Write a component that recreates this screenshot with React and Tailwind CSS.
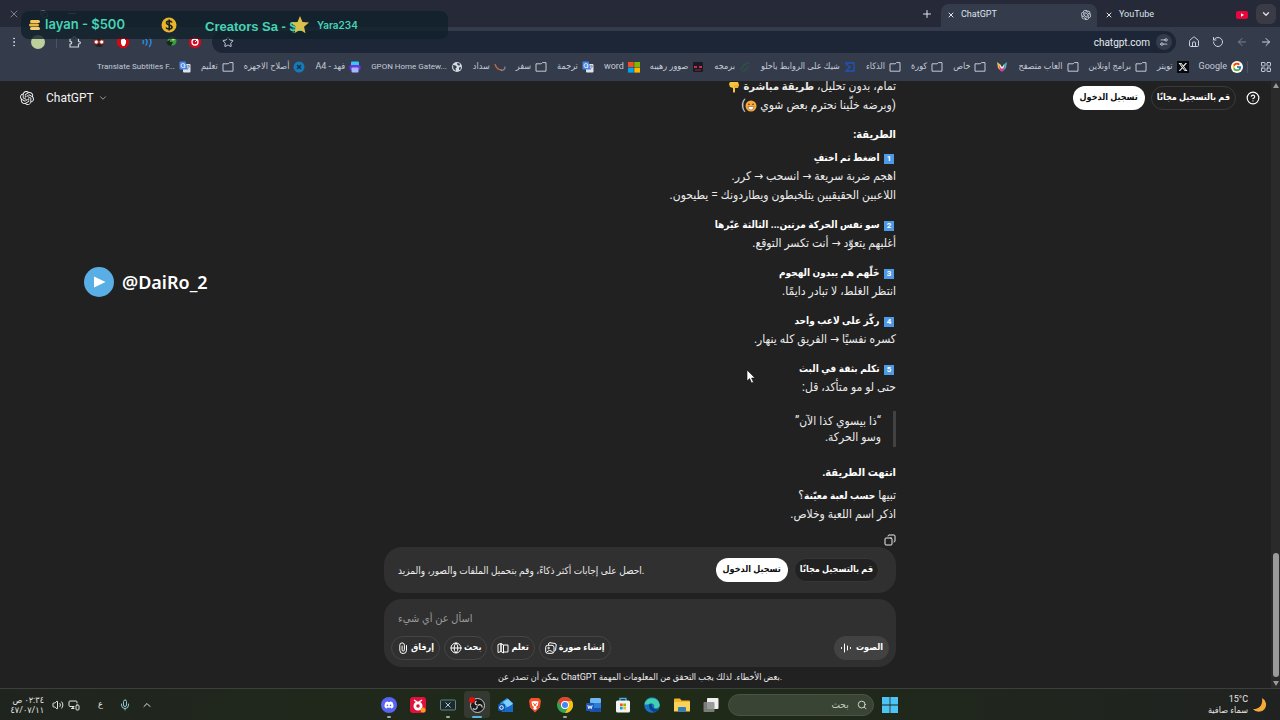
import React, { useState } from "react";
import {
  ArrowLeft,
  ArrowRight,
  ChevronDown,
  ChevronUp,
  CircleHelp,
  Copy,
  EllipsisVertical,
  Globe,
  House,
  LayoutGrid,
  Mic,
  MonitorSmartphone,
  Plus,
  RotateCcw,
  Search,
  Settings2,
  Star,
  Volume2,
  X,
} from "lucide-react";
import { SiOpenai } from "react-icons/si";
import { FcGoogle } from "react-icons/fc";
import { FaDiscord, FaXTwitter } from "react-icons/fa6";

const BookmarkIcon = ({ kind }) => {
  switch (kind) {
    case "folder":
      return (
        <svg className="size-3 shrink-0 text-[#c3cad6]" viewBox="0 0 12 12" fill="none" stroke="currentColor">
          <path d="M1 10.200V2.800h5.200l1.200-1.200H11v8.600z" strokeLinejoin="round" />
        </svg>
      );
    case "google":
      return <FcGoogle className="size-3 shrink-0 rounded-full bg-white p-px" />;
    case "x":
      return <FaXTwitter className="size-3 shrink-0 bg-[#08090b] p-px text-white" />;
    case "fox":
      return (
        <svg className="size-3 shrink-0" viewBox="0 0 12 12">
          <path d="M1 1l4 3v6L2 7z" fill="#e9c64a" />
          <path d="M11 1L7 4v6l3-3z" fill="#45b8b0" />
          <path d="M3 5l3 1 3-1-1 4-2 2-2-2z" fill="#d53a9c" />
          <path d="M4 4l2 2 2-2v2L6 8 4 6z" fill="#f6f1e6" />
        </svg>
      );
    case "sigma":
      return (
        <svg className="size-3 shrink-0" viewBox="0 0 12 12" fill="none" stroke="#2152b8" strokeWidth="1.4">
          <path d="M1 2h9v8H2l4-4-4-3" />
        </svg>
      );
    case "leaf":
      return (
        <svg className="size-3 shrink-0" viewBox="0 0 12 12" fill="none" stroke="#2f5044" strokeWidth="1.6">
          <path d="M2 9c1-4 3-6 8-7M3 10c3 0 6-2 6-5" />
        </svg>
      );
    case "face":
      return (
        <svg className="size-3 shrink-0" viewBox="0 0 12 12">
          <rect x="1" y="1" width="10" height="10" rx="1" fill="#1b1a24" />
          <path d="M2 5h3v2H2zM7 5h3v2H7z" fill="#c3304a" />
          <path d="M3 9h6" stroke="#8a2b3c" />
        </svg>
      );
    case "microsoft":
      return (
        <svg className="size-3 shrink-0" viewBox="0 0 12 12">
          <path d="M0 1h5.700v5H0z" fill="#f25022" />
          <path d="M6.300 1H12v5H6.300z" fill="#7fba00" />
          <path d="M0 6.600h5.700v5H0z" fill="#00a4ef" />
          <path d="M6.300 6.600H12v5H6.300z" fill="#ffb900" />
        </svg>
      );
    case "translate":
      return (
        <svg className="size-3 shrink-0" viewBox="0 0 12 12">
          <rect x="4" y="3" width="7.5" height="8.5" rx="1" fill="#dfe3ea" />
          <path d="M.5 1.500a1 1 0 011-1h5l2.500 8H1.500a1 1 0 01-1-1z" fill="#4a86e8" />
          <path d="M6 4.700A2 2 0 104.500 6.500h1.300V4.800H4.500" fill="none" stroke="#fff" strokeWidth=".8" />
          <path d="M7.800 5h3M9.300 4v1M10.300 5c-.3 1.600-1 2.500-1.800 3" fill="none" stroke="#6c7686" strokeWidth=".7" />
        </svg>
      );
    case "swoosh":
      return (
        <svg className="size-3 shrink-0" viewBox="0 0 12 12" fill="none" strokeWidth="1.3">
          <path d="M1 3c1 4 4 6 7 6" stroke="#c06a3c" />
          <path d="M7 9.500c2 0 4-1 4-4" stroke="#7d8796" />
        </svg>
      );
    case "globe":
      return (
        <svg className="size-3 shrink-0" viewBox="0 0 12 12">
          <circle cx="6" cy="6" r="5" fill="#d5dae3" />
          <path d="M2 4l2.500.5L6 6 4.500 7.500 5 10 2.500 8zM6 1.800l3 1-.5 2-2-.8zM8 6.500l2-.5-.5 2.500L8 9z" fill="#343c4c" />
        </svg>
      );
    case "printer":
      return (
        <svg className="size-3 shrink-0" viewBox="0 0 12 12">
          <rect x="2" y=".5" width="8" height="5" rx="1" fill="#35c8f2" />
          <rect x=".5" y="4" width="11" height="5" rx="1.5" fill="#6b37e0" />
          <rect x="2.5" y="6.500" width="7" height="5" rx="1" fill="#a9b4ff" />
        </svg>
      );
    case "tools":
      return (
        <svg className="size-3 shrink-0" viewBox="0 0 12 12">
          <circle cx="6" cy="6" r="5.500" fill="#1779b5" />
          <path d="M4 4l4 4M8 4L4 8" stroke="#12344e" strokeWidth="1.5" />
        </svg>
      );
    default:
      return null;
  }
};

const bookmarks = [
  { label: "Google", kind: "google" },
  { label: "تويتر", kind: "x" },
  { label: "برامج اونلاين", kind: "folder" },
  { label: "العاب متصفح", kind: "folder" },
  { label: "", kind: "fox" },
  { label: "خاص", kind: "folder" },
  { label: "كورة", kind: "folder" },
  { label: "الذكاء", kind: "folder" },
  { label: "شيك على الروابط ياحلو", kind: "sigma" },
  { label: "برمجه", kind: "leaf" },
  { label: "صوور رهيبه", kind: "face" },
  { label: "word", kind: "microsoft" },
  { label: "ترجمة", kind: "translate" },
  { label: "سفر", kind: "folder" },
  { label: "سداد", kind: "swoosh" },
  { label: "GPON Home Gatew...", kind: "globe", long: true },
  { label: "فهد - A4", kind: "printer" },
  { label: "أصلاح الاجهزه", kind: "tools" },
  { label: "تعليم", kind: "folder" },
  { label: "Translate Subtitles F...", kind: "translate", long: true },
];

const steps = [
  {
    title: "اضغط ثم اختفِ",
    lines: ["اهجم ضربة سريعة → انسحب → كرر.", "اللاعبين الحقيقيين يتلخبطون ويطاردونك = يطيحون."],
  },
  { title: "سو نفس الحركة مرتين... الثالثة غيّرها", lines: ["أغلبهم يتعوّد → أنت تكسر التوقع."] },
  { title: "خَلّهم هم يبدون الهجوم", lines: ["انتظر الغلط، لا تبادر دايمًا."] },
  { title: "ركّز على لاعب واحد", lines: ["كسره نفسيًا → الفريق كله ينهار."] },
  { title: "تكلم بثقة في البث", lines: ["حتى لو مو متأكد، قل:"] },
];

function TabStrip() {
  return (
    <div className="flex h-[27px] items-end bg-[#262a38] text-[#dfe3ea]">
      <div className="flex flex-1 items-center gap-5 self-center pl-2 text-[#7b808c]">
        <button aria-label="إغلاق"><X className="size-3" /></button>
        <button aria-label="تكبير"><Copy className="size-2" /></button>
        <button aria-label="تصغير" className="h-px w-2 bg-current"></button>
      </div>
      <button aria-label="علامة تبويب جديدة" className="mr-2 self-center">
        <Plus className="size-3" />
      </button>
      <div className="flex h-[23px] w-[156px] items-center rounded-t-lg bg-[#343c4c] px-1.5 pb-0.5 text-[9px]">
        <button aria-label="إغلاق ChatGPT"><X className="size-2" strokeWidth={3} /></button>
        <span className="ml-1.5 flex-1">ChatGPT</span>
        <SiOpenai className="size-2.5" />
      </div>
      <div className="flex h-[23px] w-[159px] items-center px-2 pb-0.5 text-[9px]">
        <button aria-label="إغلاق YouTube"><X className="size-2" strokeWidth={3} /></button>
        <span className="ml-1.5 flex-1">YouTube</span>
        <svg className="h-2 w-3" viewBox="0 0 12 8">
          <rect width="12" height="8" rx="2" fill="#e8063a" />
          <path d="M5 2.300v3.400L8 4z" fill="#fff" />
        </svg>
      </div>
      <button aria-label="البحث في علامات التبويب" className="mr-1 flex size-5 items-center justify-center self-center rounded-md bg-[#3a3b44]">
        <ChevronDown className="size-2.5" strokeWidth={3} />
      </button>
    </div>
  );
}

function Toolbar() {
  return (
    <div className="flex h-[30px] items-center bg-[#343c4c] px-2 text-[#ccd2dd]">
      <div className="flex w-[204px] items-center gap-3">
        <button aria-label="القائمة"><EllipsisVertical className="size-3" /></button>
        <button aria-label="الملف الشخصي" className="-mx-px size-3.5 rounded-full bg-[#bdd09c]"></button>
        <span className="h-3 w-px bg-[#4b5464]"></span>
        <button aria-label="الإضافات">
          <svg className="size-3" viewBox="0 0 12 12" fill="none" stroke="currentColor" strokeWidth="1.2" strokeLinejoin="round">
            <path d="M1 2.500h3q0-1.800 1.300-1.800T6.600 2.500H9.500v3q1.900 0 1.900 1.200T9.500 8v3H1V8q1.700 0 1.700-1.300T1 5.400z" />
          </svg>
        </button>
        <svg className="size-3" viewBox="0 0 12 12">
          <path d="M2 3h8l1 5-3 3H4L1 8z" fill="#2a2022" />
          <circle cx="3.3" cy="6" r="2" fill="#fff" stroke="#d2433c" />
          <circle cx="8.7" cy="6" r="2" fill="#fff" stroke="#d2433c" />
        </svg>
        <svg className="size-3" viewBox="0 0 12 12">
          <path d="M3.500 0h5L12 3.500v5L8.500 12h-5L0 8.500v-5z" fill="#cf0a14" />
          <path d="M4 3.500v4l1.500 2.500h2L9 7V4H8V2.500H5.200v1z" fill="#fff" />
        </svg>
        <svg className="size-3" viewBox="0 0 12 12" fill="none" stroke="#2f86d6" strokeWidth="1.5" strokeLinecap="round">
          <path d="M2 4.500q1 1.500 0 3M5 3q2 3 0 6M8.500 1.500q3 4.500 0 9" />
        </svg>
        <svg className="size-3" viewBox="0 0 12 12">
          <circle cx="7" cy="5" r="4.500" fill="#3a9c45" />
          <path d="M1 6l4-2v2h3l-2 4-3-1z" fill="#142b1b" />
          <path d="M6 2l4 1-2 2z" fill="#e5d75b" />
        </svg>
        <svg className="size-3" viewBox="0 0 12 12">
          <rect width="12" height="12" rx="5" fill="#cf0a20" />
          <circle cx="6" cy="6" r="3" fill="none" stroke="#fff" strokeWidth="1.3" />
          <path d="M6 6l3-3" stroke="#fff" />
        </svg>
      </div>
      <div className="flex h-[22px] flex-1 items-center rounded-full bg-[#1c2636] pr-1 pl-2.5">
        <button aria-label="إضافة إشارة"><Star className="size-3" /></button>
        <input
          aria-label="شريط العنوان"
          defaultValue="chatgpt.com"
          className="min-w-0 flex-1 bg-transparent px-1.5 text-right text-[10px] text-[#e8ebf0] outline-none"
        />
        <button aria-label="معلومات الموقع" className="flex size-4 items-center justify-center rounded-full bg-[#343c4c]">
          <Settings2 className="size-2.5 -scale-x-100" />
        </button>
      </div>
      <div className="flex items-center gap-3 pl-3">
        <button aria-label="الصفحة الرئيسية"><House className="size-3" /></button>
        <button aria-label="إعادة تحميل"><RotateCcw className="size-3" /></button>
        <button aria-label="للأمام" className="text-[#7b8290]"><ArrowLeft className="size-3" /></button>
        <button aria-label="رجوع"><ArrowRight className="size-3" /></button>
      </div>
    </div>
  );
}

function BookmarksBar() {
  return (
    <nav dir="rtl" className="flex h-6 items-center bg-[#343c4c] pr-2 pb-1 text-[9px] whitespace-nowrap text-[#c3cad6]">
      <button aria-label="التطبيقات"><LayoutGrid className="size-3" /></button>
      <span className="mr-3 ml-1 h-3 w-px bg-[#4b5464]"></span>
      <div className="flex items-center gap-2.5">
        {bookmarks.map((b, i) => (
          <a key={i} href="#" aria-label={b.label || "إشارة"} className="flex items-center gap-1">
            <BookmarkIcon kind={b.kind} />
            {b.label && (
              <span dir="auto" className={b.long ? "text-[8px]" : ""}>
                {b.label}
              </span>
            )}
          </a>
        ))}
      </div>
    </nav>
  );
}

function DonationOverlay() {
  return (
    <div className="absolute top-[11px] left-[21px] flex h-7 w-[427px] items-center rounded-lg bg-[#10202b]/80 pl-2 font-['Inter',sans-serif] font-semibold whitespace-nowrap text-[#45d3b4]">
      <svg className="size-3 shrink-0" viewBox="0 0 12 12">
        <rect x="1" y="1" width="10" height="3" rx="1.5" fill="#f4c95a" />
        <rect x="0" y="4.500" width="10" height="3" rx="1.5" fill="#eab543" />
        <rect x="1" y="8" width="10" height="3" rx="1.5" fill="#f2cf78" />
      </svg>
      <span className="w-[120px] pl-1 text-[13px]">layan - $500</span>
      <svg className="size-4 shrink-0" viewBox="0 0 16 16">
        <circle cx="8" cy="8" r="7.500" fill="#eab526" />
        <path d="M11 5.500C10 3.500 5.500 3.700 5.500 6S11 7.500 11 10s-5 2.500-6 .5M8.200 2.500v11" fill="none" stroke="#15202a" strokeWidth="1.6" />
      </svg>
      <span className="w-[90px] pt-1 pl-7 font-['Liberation_Sans',sans-serif] text-[13px] font-bold">Creators Sa - $5</span>
      <svg className="relative ml-6 size-[18px] shrink-0" viewBox="0 0 16 16">
        <path d="M8 0l2.200 5.300 5.800.5-4.400 3.800 1.300 5.700L8 12.200l-4.900 3.100 1.300-5.700L0 5.800l5.800-.5z" fill="#d9c04a" />
      </svg>
      <span className="pl-2 text-[10px]">Yara234</span>
    </div>
  );
}

function ChatHeader() {
  return (
    <header className="absolute inset-x-0 top-0 flex items-center justify-between pt-[5px] pr-5 pl-5">
      <button className="flex items-center text-[12px] text-[#f3f3f3]">
        <SiOpenai className="mr-3 size-3.5" />
        ChatGPT
        <ChevronDown className="ml-1 size-2.5 text-[#b4b4b4]" />
      </button>
      <div className="flex items-center gap-1.5 text-[9px] font-bold">
        <button className="h-6 rounded-full bg-white px-[7px] text-[#0d0d0d]">تسجيل الدخول</button>
        <button className="h-6 rounded-full border border-[#3a3a3a] px-[5px] text-white">قم بالتسجيل مجانًا</button>
        <button aria-label="مساعدة" className="ml-1 text-white"><CircleHelp className="size-3.5" /></button>
      </div>
    </header>
  );
}

function Conversation() {
  return (
    <section className="flex min-h-0 flex-1 flex-col justify-end overflow-hidden">
      <article dir="rtl" className="mx-auto w-full max-w-[512px] text-[12px] leading-[19px] text-[#ececec]">
        <p>
          تمام، بدون تحليل، <strong className="text-[11px]">طريقة مباشرة</strong>{" "}
          <svg className="inline size-3" viewBox="0 0 12 12" role="img" aria-label="👇">
            <path d="M2 1h8l1 3-1 3H7v4q-1 1.500-2 0V7L2 6 1 3z" fill="#f9c23c" />
            <path d="M7 7V4M9 7V4" stroke="#d18a1c" strokeWidth=".6" />
          </svg>
          <br />
          (وبرضه خلّينا نحترم بعض شوي{" "}
          <svg className="inline size-3" viewBox="0 0 12 12" role="img" aria-label="😄">
            <circle cx="6" cy="6" r="5.500" fill="#f9a93c" />
            <path d="M3 6.500h6Q8.500 10 6 10T3 6.500z" fill="#fff" stroke="#7a3d12" strokeWidth=".5" />
            <path d="M3 4.500q1-1 1.800 0M7.200 4.500q1-1 1.800 0" stroke="#5a2d0c" fill="none" />
          </svg>
          )
        </p>
        <h3 className="mt-2.5 mb-1 text-[11px] font-bold text-white">الطريقة:</h3>
        <div className="flex flex-col gap-2.5">
          {steps.map((s, i) => (
            <div key={s.title}>
              <p className="text-[10px]">
                <span className="mx-0.5 inline-flex size-2.5 items-center justify-center bg-[#4f9ae6] text-[8px] leading-none font-bold text-white">
                  {i + 1}
                </span>{" "}
                <strong className="text-white">{s.title}</strong>
              </p>
              {s.lines.map((line) => (
                <p key={line}>{line}</p>
              ))}
            </div>
          ))}
        </div>
        <blockquote className="mt-3.5 border-r-[3px] border-[#424242] py-0.5 pr-3 leading-4">
          <p>
            “ذا بيسوي كذا الآن”
            <br />
            وسو الحركة.
          </p>
        </blockquote>
        <h3 className="mt-4 mb-1 text-[11px] font-bold text-white">انتهت الطريقة.</h3>
        <p>
          تبيها <strong className="text-[10px] text-white">حسب لعبة معيّنة</strong>؟
          <br />
          اذكر اسم اللعبة وخلاص.
        </p>
        <button aria-label="نسخ" className="mt-2.5 mb-px block">
          <Copy className="size-3 -scale-x-100" />
        </button>
      </article>
    </section>
  );
}

const ClipIcon = () => (
  <svg className="size-3" viewBox="0 0 12 12" fill="none" stroke="currentColor" strokeLinecap="round">
    <path d="M9.500 3.500v4.700a3.300 3.300 0 01-6.700 0V3.200a2.300 2.300 0 014.600 0v4.700a1.100 1.100 0 01-2.300 0V4" />
  </svg>
);

const BookIcon = () => (
  <svg className="size-3" viewBox="0 0 12 12" fill="none" stroke="currentColor" strokeLinejoin="round">
    <path d="M4 1.500L1 2.500v8l3-1zM4 1.500v8l2.500 1.500V3zM6.500 3h4.500v7H6.500z" />
  </svg>
);

const PictureIcon = () => (
  <svg className="size-3" viewBox="0 0 12 12" fill="none" stroke="currentColor">
    <path d="M3.500 3V2q.2-1.300 1.500-1.300l5 .8q1.300.3 1.200 1.500L10.600 8Q10.300 9 9.300 9" />
    <rect x=".7" y="3.300" width="8.300" height="8" rx="2" />
    <circle cx="3.600" cy="6" r=".8" />
    <path d="M1.500 10.500q3-4 6.500 0" />
  </svg>
);

const VoiceIcon = () => (
  <svg className="size-3" viewBox="0 0 12 12" fill="none" stroke="currentColor" strokeLinecap="round">
    <path d="M1.500 5.500v1M4.500 2v8M7.500 4v4M10.500 5.500v1" />
  </svg>
);

function Chip({ icon: Icon, children }) {
  return (
    <button className="flex h-6 items-center gap-0.5 rounded-full border border-[#454545] px-[5px]">
      <Icon className="size-3" />
      {children}
    </button>
  );
}

function Composer() {
  const [text, setText] = useState("");
  return (
    <footer className="mx-auto w-full max-w-[512px] text-[9px] text-white">
      <div className="flex h-[46px] items-center rounded-[18px] bg-[#303030] pr-[17px] pl-3.5">
        <p className="flex-1 text-[10px] whitespace-nowrap text-[#ececec]">
          احصل على إجابات أكثر ذكاءً، وقم بتحميل الملفات والصور، والمزيد.
        </p>
        <div className="flex gap-1.5 font-bold">
          <button className="h-6 rounded-full bg-white px-[7px] text-[#0d0d0d]">تسجيل الدخول</button>
          <button className="h-6 rounded-full border border-[#363636] bg-[#212121] px-[5px]">قم بالتسجيل مجانًا</button>
        </div>
      </div>
      <form className="mt-1.5 flex h-[68px] flex-col justify-between rounded-[18px] bg-[#303030] px-[7px] pt-3 pb-[7px]" onSubmit={(e) => e.preventDefault()}>
        <input
          aria-label="اسأل عن أي شيء"
          placeholder="اسأل عن أي شيء"
          value={text}
          onChange={(e) => setText(e.target.value)}
          className="w-full bg-transparent px-[7px] text-[11px] outline-none placeholder:text-[#9b9b9b]"
        />
        <div className="flex items-center gap-1 font-bold">
          <Chip icon={ClipIcon}>إرفاق</Chip>
          <Chip icon={Globe}>بحث</Chip>
          <Chip icon={BookIcon}>تعلم</Chip>
          <Chip icon={PictureIcon}>إنشاء صورة</Chip>
          <button className="ml-auto flex h-6 items-center gap-1 rounded-full bg-[#424242] px-1.5">
            <VoiceIcon />
            الصوت
          </button>
        </div>
      </form>
      <p className="h-[21px] text-center leading-[21px] whitespace-nowrap text-[#ececec]">
        يمكن أن تصدر عن ChatGPT بعض الأخطاء. لذلك يجب التحقق من المعلومات المهمة.
      </p>
    </footer>
  );
}

const apps = [
  {
    name: "Discord",
    running: true,
    icon: <FaDiscord className="size-4 rounded-full bg-[#5865f2] p-[3px] text-white" />,
  },
  {
    name: "Recorder",
    icon: (
      <svg className="size-4" viewBox="0 0 16 16">
        <rect width="16" height="16" rx="3" fill="#e0123c" />
        <circle cx="8" cy="9" r="4.500" fill="#fff" />
        <circle cx="8" cy="9" r="1.800" fill="#e0123c" />
        <path d="M4 3l3 2M12 3L9 5" stroke="#fff" strokeWidth="1.5" />
        <circle cx="13" cy="13" r="2.500" fill="#f5a01c" />
      </svg>
    ),
  },
  {
    name: "Xbox Bar",
    running: true,
    icon: (
      <svg className="size-4" viewBox="0 0 16 16" fill="none" stroke="#5d8791">
        <rect x=".5" y="3" width="15" height="10" rx="1" fill="#1d2a2c" />
        <path d="M5.500 5.500l5 5M10.500 5.500l-5 5" stroke="#b5c9cc" />
      </svg>
    ),
  },
  {
    name: "OBS Studio",
    active: true,
    icon: (
      <svg className="size-4" viewBox="0 0 16 16">
        <circle cx="8.500" cy="8.500" r="7" fill="#18191b" stroke="#c9c9c9" />
        <path d="M8.500 8c-3 0-3-3-1-4M9 8.500c2-2 4.500 0 4 2M8 9c1 3-2 4-4 2.500" stroke="#d8d8d8" strokeWidth="1.2" fill="none" />
        <circle cx="3" cy="3" r="3" fill="#e80c0c" />
      </svg>
    ),
  },
  {
    name: "Outlook",
    icon: (
      <svg className="size-4" viewBox="0 0 16 16">
        <path d="M2 6l7-5 6 5v8H4z" fill="#2a8be6" />
        <path d="M5 5l5-3 5 5-5 4z" fill="#7fd0fb" />
        <path d="M3 14l12-7v8H4z" fill="#1768c9" />
        <rect x="0" y="7" width="7" height="7" rx="1" fill="#1255ac" />
        <circle cx="3.500" cy="10.500" r="1.800" fill="none" stroke="#fff" />
      </svg>
    ),
  },
  {
    name: "Brave",
    icon: (
      <svg className="size-4" viewBox="0 0 16 16">
        <path d="M4 1h8l2 2.500-1 7L8 15.500 3 10.500 2 3.500z" fill="#f4512c" />
        <path d="M4.500 4.500L8 4l3.500.5-.7 4L9 10l1 1.500-2 1.500-2-1.500L7 10 5.200 8.500z" fill="#fff" />
        <path d="M6 6.500l1.500.7L8 9l.5-1.800L10 6.500" stroke="#f4512c" fill="none" />
      </svg>
    ),
  },
  {
    name: "Chrome",
    running: true,
    icon: (
      <svg className="size-4" viewBox="0 0 16 16">
        <circle cx="8" cy="8" r="8" fill="#33a552" />
        <path d="M4.500 10L1.070 4A8 8 0 0114.930 4H8z" fill="#e64335" />
        <path d="M8 4h6.930A8 8 0 018 16l3.500-6z" fill="#fbbf12" />
        <circle cx="8" cy="8" r="4" fill="#fff" />
        <circle cx="8" cy="8" r="3" fill="#4285f4" />
      </svg>
    ),
  },
  {
    name: "Word",
    icon: (
      <svg className="size-4" viewBox="0 0 16 16">
        <rect x="4" y="1" width="11" height="14" rx="1.5" fill="#2b7cd8" />
        <rect x="4" y="1" width="11" height="5" rx="1.5" fill="#6fb8f4" />
        <rect x="4" y="11" width="11" height="4" rx="1" fill="#1a4fa8" />
        <rect x="0" y="6" width="8" height="8" rx="1" fill="#1b56b8" />
        <path d="M1.800 8.200l1 3.500L4 8.800l1.200 2.900 1-3.500" stroke="#fff" fill="none" strokeWidth=".9" />
      </svg>
    ),
  },
  {
    name: "Microsoft Store",
    icon: (
      <svg className="size-4" viewBox="0 0 16 16">
        <path d="M5 4V1.500h6V4" fill="none" stroke="#3fb2ee" strokeWidth="1.3" />
        <rect x="1" y="3.500" width="14" height="12" rx="1.5" fill="#f1f3f5" />
        <path d="M5 6.500h2.700v2.700H5z" fill="#f25022" />
        <path d="M8.300 6.500H11v2.700H8.300z" fill="#7fba00" />
        <path d="M5 9.800h2.700v2.700H5z" fill="#00a4ef" />
        <path d="M8.300 9.800H11v2.700H8.300z" fill="#ffb900" />
      </svg>
    ),
  },
  {
    name: "Edge",
    icon: (
      <svg className="size-4" viewBox="0 0 16 16">
        <circle cx="8" cy="8" r="7.800" fill="#1573c4" />
        <path d="M.5 7A7.800 7.800 0 0115.800 8c0 3-4 4-6 2.500 1-1 .8-4-2.300-4S2 9 .5 7z" fill="#41cfae" />
        <path d="M7.500 6.500C4 6.500 4 12 9 14.500c2 .8 4-.5 5.500-2.500-3 1-7-.5-7-5.500z" fill="#0c3f86" />
      </svg>
    ),
  },
  {
    name: "File Explorer",
    icon: (
      <svg className="size-4" viewBox="0 0 16 16">
        <path d="M0 2.500A1 1 0 011 1.500h5l1.500 2H15a1 1 0 011 1V14H0z" fill="#f0b52a" />
        <path d="M0 5h16v9.500H0z" fill="#fbd257" />
        <path d="M4 14.500V11a1 1 0 011-1h6a1 1 0 011 1v3.500z" fill="#2a7fc4" />
      </svg>
    ),
  },
  {
    name: "Task View",
    icon: (
      <svg className="size-4" viewBox="0 0 16 16">
        <rect x="4" y="1" width="11.500" height="11" rx="1" fill="#f0f0f0" />
        <rect x=".5" y="5" width="11" height="10" rx="1" fill="#8a8c8a" opacity=".85" />
      </svg>
    ),
  },
];

function Taskbar() {
  return (
    <div className="grid h-8 grid-cols-[1fr_auto_1fr] items-center border-t border-[#3c3f3c] bg-linear-to-r from-[#20241f] via-[#1f2b17] to-[#202221] text-[8px] text-[#e4e6e3]">
      <div className="flex items-center pl-3">
        <div dir="rtl" className="w-8 text-right text-[9px] leading-[10px] whitespace-nowrap">
          <div>٠٢:٣٤ ص</div>
          <div>٤٧/٠٧/١١</div>
        </div>
        <button aria-label="الصوت" className="ml-2"><Volume2 className="size-3" /></button>
        <button aria-label="الشبكة" className="ml-1"><MonitorSmartphone className="size-3" /></button>
        <button className="ml-[18px] text-[9px]">ع</button>
        <button aria-label="الميكروفون" className="ml-4 text-[#8cc7d0]"><Mic className="size-3" /></button>
        <button aria-label="إظهار المزيد" className="ml-2.5"><ChevronUp className="size-3" /></button>
      </div>
      <div className="flex items-center pr-1.5">
        <div className="flex w-[348px] justify-between">
          {apps.map((app) => (
            <button
              key={app.name}
              aria-label={app.name}
              className={
                app.active
                  ? "relative flex h-[27px] w-[26px] items-center justify-center rounded-sm bg-[#343a31]"
                  : "relative flex h-[27px] w-[26px] items-center justify-center"
              }
            >
              {app.icon}
              {app.running && <span className="absolute bottom-0 h-0.5 w-1 rounded-full bg-[#a5a8a3]"></span>}
              {app.active && <span className="absolute bottom-0 h-0.5 w-2.5 rounded-full bg-[#5cb4de]"></span>}
            </button>
          ))}
        </div>
        <label dir="rtl" className="ml-1 flex h-[22px] w-[146px] items-center gap-2 rounded-full border border-[#4a5344] bg-[#3a4434] px-1.5">
          <Search className="size-3" />
          <input
            aria-label="بحث"
            placeholder="بحث"
            className="w-full min-w-0 bg-transparent text-[10px] outline-none placeholder:text-[#c5cbc0]"
          />
        </label>
        <button aria-label="ابدأ" className="ml-2">
          <svg className="size-4" viewBox="0 0 16 16" fill="#4cc4f4">
            <path d="M0 0h7.600v7.600H0zM8.400 0H16v7.600H8.400zM0 8.400h7.600V16H0zM8.400 8.400H16V16H8.400z" />
          </svg>
        </button>
      </div>
      <div className="flex items-center justify-end gap-1 pr-3">
        <div className="text-right text-[9px] leading-[11px]">
          <div>15°C</div>
          <div>سماء صافية</div>
        </div>
        <svg className="size-4" viewBox="0 0 16 16">
          <path d="M10 1a7.300 7.300 0 11-9 11C8 12.500 11 7 10 1z" fill="#f5a936" />
        </svg>
      </div>
    </div>
  );
}

export default function App() {
  return (
    <div className="relative flex h-screen flex-col overflow-hidden font-['Roboto','DejaVu_Sans_Condensed','DejaVu_Sans',sans-serif]">
      <TabStrip />
      <Toolbar />
      <BookmarksBar />
      <main className="relative flex min-h-0 flex-1 flex-col bg-[#212121]">
        <Conversation />
        <Composer />
        <ChatHeader />
        <div className="absolute inset-y-0 right-0 flex w-[9px] flex-col items-center justify-between bg-[#2a2a2a] py-0.5">
          <span className="border-x-[3px] border-b-[5px] border-x-transparent border-b-[#9b9b9b]"></span>
          <span className="mt-auto mb-1 h-[124px] w-1.5 rounded-full bg-[#9b9b9b]"></span>
          <span className="border-x-[3px] border-t-[5px] border-x-transparent border-t-[#9b9b9b]"></span>
        </div>
      </main>
      <Taskbar />
      <DonationOverlay />
      {/* stream watermark */}
      <div className="absolute top-[267px] left-[84px] flex items-center gap-2 font-['Noto_Sans',sans-serif] text-[18px] font-semibold text-white">
        <svg className="size-[30px]" viewBox="0 0 30 30">
          <circle cx="15" cy="15" r="15" fill="#5aaee6" />
          <path d="M10 9.500v11L21.500 15z" fill="#fff" />
        </svg>
        @DaiRo_2
      </div>
      <svg className="absolute top-[370px] left-[746px] h-3.5 w-2.5" viewBox="0 0 10 14">
        <path d="M1 0v11l2.600-2.400L5.500 13l2-.8L5.600 8H9z" fill="#fff" stroke="#111" strokeWidth=".6" />
      </svg>
    </div>
  );
}
